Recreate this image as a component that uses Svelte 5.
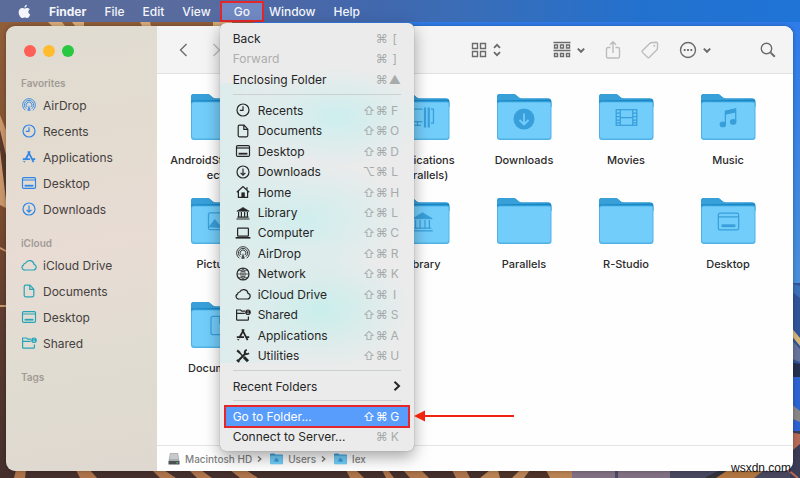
<script>
  const menus = ["File", "Edit", "View", "Go", "Window", "Help"];

  const favorites = [
    { name: "AirDrop", icon: "airdrop" },
    { name: "Recents", icon: "clock" },
    { name: "Applications", icon: "apps" },
    { name: "Desktop", icon: "desktop" },
    { name: "Downloads", icon: "download" },
  ];
  const icloud = [
    { name: "iCloud Drive", icon: "cloud" },
    { name: "Documents", icon: "doc" },
    { name: "Desktop", icon: "desktop" },
    { name: "Shared", icon: "shared" },
  ];
  const sections = [
    { title: "Favorites", items: favorites, tone: "blue" },
    { title: "iCloud", items: icloud, tone: "teal" },
    { title: "Tags", items: [], tone: "blue" },
  ];

  const navigation = [
    { name: "Back", keys: ["⌘", "["] },
    { name: "Forward", keys: ["⌘", "]"], disabled: true },
    { name: "Enclosing Folder", keys: ["⌘", "▲"] },
  ];
  const places = [
    { name: "Recents", icon: "clock", keys: ["⇧", "⌘", "F"] },
    { name: "Documents", icon: "doc", keys: ["⇧", "⌘", "O"] },
    { name: "Desktop", icon: "desktop", keys: ["⇧", "⌘", "D"] },
    { name: "Downloads", icon: "download", keys: ["⌥", "⌘", "L"] },
    { name: "Home", icon: "home", keys: ["⇧", "⌘", "H"] },
    { name: "Library", icon: "library", keys: ["⇧", "⌘", "L"] },
    { name: "Computer", icon: "computer", keys: ["⇧", "⌘", "C"] },
    { name: "AirDrop", icon: "airdrop", keys: ["⇧", "⌘", "R"] },
    { name: "Network", icon: "network", keys: ["⇧", "⌘", "K"] },
    { name: "iCloud Drive", icon: "cloud", keys: ["⇧", "⌘", "I"] },
    { name: "Shared", icon: "shared", keys: ["⇧", "⌘", "S"] },
    { name: "Applications", icon: "apps", keys: ["⇧", "⌘", "A"] },
    { name: "Utilities", icon: "tools", keys: ["⇧", "⌘", "U"] },
  ];
  const connect = [
    { name: "Go to Folder...", keys: ["⇧", "⌘", "G"], selected: true },
    { name: "Connect to Server...", keys: ["⌘", "K"] },
  ];

  // null leaves the cell free
  const folders = [
    { name: "AndroidStudioProjects" },
    null,
    { name: "Applications (Parallels)", glyph: "parallels" },
    { name: "Downloads", glyph: "download" },
    { name: "Movies", glyph: "film" },
    { name: "Music", glyph: "music" },
    { name: "Pictures", glyph: "picture" },
    null,
    { name: "Library", glyph: "library" },
    { name: "Parallels" },
    { name: "R-Studio" },
    { name: "Desktop", glyph: "desktop" },
    { name: "Documents", glyph: "doc" },
  ];

  const icons = {
    airdrop: `<path d="M4.2 13.2A6.4 6.4 0 1 1 11.8 13.2M5.2 11.6A4.6 4.6 0 1 1 10.8 11.6M6.1 10.1A2.9 2.9 0 1 1 9.9 10.1" stroke-width=".9"/><path d="M8 8 6.2 13.6Q8 14.4 9.8 13.6Z" fill="currentColor" stroke="none" opacity=".8"/>`,
    clock: `<circle cx="8" cy="8" r="6"/><path d="M8 4.2V8.3H4.8"/>`,
    apps: `<path d="M8.9 2.4 4.2 11M7.1 2.4 12.6 13.2M1.8 10.2H9M11.4 10.2H14.2M3.5 12.2 3 13.2" stroke-width="1.8"/>`,
    desktop: `<rect x="1.5" y="2.6" width="13" height="10.8" rx="1.2"/><path d="M1.5 5H14.5"/><rect x="3.6" y="9.8" width="8.8" height="1.8" fill="currentColor" stroke="none"/>`,
    download: `<circle cx="8" cy="8" r="6"/><path d="M8 4.6V11M5.6 8.8 8 11.2 10.4 8.8"/>`,
    cloud: `<path d="M4 13H12.4A2.9 2.9 0 0 0 13 7.300 4.400 4.400 0 0 0 4.700 6 2.400 2.400 0 0 0 2.500 8.100 2.600 2.600 0 0 0 4 13Z"/>`,
    doc: `<path d="M4.4 2.2H9L12.8 6.2V12.6Q12.8 13.8 11.6 13.8H4.4Q3.2 13.8 3.2 12.6V3.4Q3.2 2.2 4.4 2.2ZM8.8 2.4V6.4H12.6"/>`,
    shared: `<path d="M10 4.2H6.8L5.6 3H1.6V12.4Q1.6 13.2 2.4 13.2H12.6Q13.4 13.2 13.4 12.4V9.4M1.6 6.4H9.8"/><circle cx="13" cy="5.2" r="2.8" fill="currentColor" stroke="none"/><path d="M13 3.4V4.6M11.8 6.6Q13 5.2 14.2 6.6" stroke="#eee" stroke-width=".8"/>`,
    home: `<path d="M1.8 8.2 8 2.6 14.2 8.2M3.4 7.2V13.4H12.6V7.2M12 5.6V3.2"/><rect x="6.4" y="8.4" width="3.4" height="5" fill="currentColor" stroke="none"/>`,
    library: `<path d="M1.8 6.2 8 2.4 14.2 6.2Z" fill="currentColor" stroke-width=".6"/><path d="M3.6 7V12M6.4 7V12M9.6 7V12M12.4 7V12M2.4 12.2H13.6M1.4 14H14.6"/>`,
    computer: `<rect x="2.6" y="3.2" width="10.8" height="8" rx=".6"/><path d="M.6 12.8H15.4" stroke-width="1.6"/>`,
    network: `<circle cx="8" cy="8" r="6"/><path d="M8 2V14M2 8H14M3.8 4Q8 7 12.2 4M3.8 12Q8 9 12.2 12M8 2Q3.6 8 8 14M8 2Q12.4 8 8 14" stroke-width=".7"/>`,
    tools: `<path d="M4.6 4.8 8 8.300" stroke-width="1.400"/><path d="M8.800 9 13 13.200" stroke-width="3"/><path d="M2.2 2.4 5 5" stroke-width="2.200"/><path d="M11.2 4.8 3 13" stroke-width="2"/><path d="M11.800 1.800Q9.200 2.600 9.800 5.200 11 7.200 14 5.200M1.800 11.800 4.200 14.200" stroke-width="1.800"/>`,
    film: `<rect x="1.4" y="3" width="13.2" height="10"/><path d="M4 3V13M12 3V13M4 8H12M1.4 5.2H4M1.4 7.4H4M1.4 9.6H4M1.4 11.4H4M12 5.2H14.6M12 7.4H14.6M12 9.6H14.6M12 11.4H14.6" stroke-width=".8"/>`,
    music: `<path d="M6 12V4L12.6 2.6V10.4"/><path d="M6 3.6 12.8 2V4.8L6 6.2Z" fill="currentColor" stroke="none"/><ellipse cx="4.4" cy="12.4" rx="1.700" ry="1.4" fill="currentColor"/><ellipse cx="11" cy="10.8" rx="1.700" ry="1.4" fill="currentColor"/>`,
    picture: `<rect x="1.6" y="2.4" width="12.8" height="10.8" rx="1"/><circle cx="10.8" cy="5.6" r="1" fill="currentColor"/><path d="M2 11.6 5.6 7 9 11 11 9.4 14 12.4" fill="currentColor"/>`,
    parallels: `<path d="M8 2.6H1V10.6H8M2.8 13H7M4.8 11V13M13.4 2.6H15V11.6H13.4"/><path d="M9.6 1.6V14.4M12 1.6V14.4" stroke-width="1.4"/>`,
  };
</script>

{#snippet icon(name)}
  <svg class="icon" viewBox="0 0 16 16" aria-hidden="true">{@html icons[name]}</svg>
{/snippet}

{#snippet chevron()}
  <svg class="chevron" viewBox="0 0 8 16" aria-hidden="true"><path d="M.8 6.6 4 9.8 7.2 6.6" /></svg>
{/snippet}

{#snippet folder()}
  <path d="M1 8V4Q1 1 4 1H17Q19 1 20.500 2.400L22.500 4.200Q24 5.600 26 5.600H52Q55.500 5.600 55.500 9V14H1Z" fill="#1787c6" />
  <path d="M1 8V4Q1 1 4 1H17Q19 1 20.500 2.400L22.500 4.200Q24 5.600 26 5.600H52Q53.500 5.600 54.400 6.600L2 7.500Z" fill="#38a0d8" />
  <path d="M1 11Q1 8.400 3.600 8.400H53Q55.500 8.400 55.500 11V44Q55.500 47 52.500 47H4Q1 47 1 44Z" fill="#4fb2e6" />
  <path d="M2 11Q2 9.400 3.600 9.400H53Q54.500 9.400 54.500 11V43Q54.500 45.500 52 45.500H4.500Q2 45.500 2 43Z" fill="#72cdfa" />
{/snippet}

{#snippet menuGroup(items, kind)}
  <ul class="group {kind}">
    {#each items as item}
      <li>
        <button class="item" class:selected={item.selected} disabled={item.disabled}>
          {#if item.icon}{@render icon(item.icon)}{/if}
          <span class="name">{item.name}</span>
          <span class="keys">
            {#each item.keys as key}<kbd>{key}</kbd>{/each}
          </span>
        </button>
        {#if item.selected}
          <svg class="arrow" viewBox="0 0 102 12" aria-hidden="true">
            <path d="M10 6H101" stroke="#f0230f" stroke-width="2" />
            <path d="M1 6 12 .5V11.500Z" fill="#f0230f" />
          </svg>
        {/if}
      </li>
    {/each}
  </ul>
{/snippet}

<div class="screen">
  <svg class="wallpaper" viewBox="0 0 800 478" preserveAspectRatio="none" aria-hidden="true">
    <defs>
      <linearGradient id="rock" x1="0" y1="0" x2="0" y2="1">
        <stop offset="0" stop-color="#93603a" />
        <stop offset=".45" stop-color="#7a4b2f" />
        <stop offset=".7" stop-color="#5a3a30" />
        <stop offset="1" stop-color="#452f2c" />
      </linearGradient>
      <linearGradient id="sky" x1="0" y1="0" x2="0" y2="1">
        <stop offset="0" stop-color="#2f7bea" />
        <stop offset="1" stop-color="#4a8fd8" />
      </linearGradient>
    </defs>
    <rect width="800" height="478" fill="url(#rock)" />
    <path d="M48 22H62L68 30H56ZM72 22H84V30H78ZM140 22H150L152 30H144ZM213 22H232V30H213Z" fill="#d9ac78" />
    <path d="M0 115 6 130V208L0 205ZM0 247 8 251V253L0 249ZM0 305H8V307H0Z" fill="#c8966a" />
    <path d="M0 130 6 155V200L0 150Z" fill="#57382b" />
    <path d="M16 470H26L25 478H14ZM76 470H90L97 478H80ZM152 470H164L176 478H160ZM189 470H201L212 478H197ZM230 470H246L258 478H240ZM346 470H356L364 478H350ZM382 470H388L394 478H386ZM403 470H421L429 478H410ZM452 470H466L470 478H456Z" fill="#ad744b" />
    <path d="M490 470H572V478H480Z" fill="#ba8354" />
    <path d="M498 470H520L512 478H500ZM530 470H546L550 478H524Z" fill="#4e3329" />
    <rect x="572" y="470" width="98" height="8" fill="#817083" />
    <rect x="615" y="470" width="3" height="8" fill="#4c4964" />
    <rect x="670" y="470" width="130" height="8" fill="#484760" />
    <path d="M704 478 724 470H764L754 478Z" fill="#b17640" />
    <path d="M704 478 720 470H728L716 478Z" fill="#33323b" />
    <path d="M254 20H800V284H780V40H254Z" fill="url(#sky)" />
    <path d="M790 283H800V376H790Z" fill="#315397" />
    <path d="M790 283 800 286V298L790 290Z" fill="#3b70b8" />
    <path d="M790 326 800 338V346L790 334Z" fill="#d6b578" />
    <path d="M790 338 800 349V362L790 358Z" fill="#68739b" />
    <path d="M790 362 800 364V378H790Z" fill="#25304f" />
    <path d="M790 377H800V432H790Z" fill="#2d62d1" />
    <path d="M790 403 800 411V422L790 418Z" fill="#8a8587" />
    <path d="M790 431H800V478H790Z" fill="#3b3b55" />
    <path d="M790 432 800 434V444L793 450Z" fill="#b36a57" />
    <path d="M788 470 798 478" stroke="#b36a57" stroke-width="2" />
  </svg>

  <nav class="menubar">
    <button aria-label="Apple menu">
      <svg class="apple" viewBox="0 0 14 16" aria-hidden="true">
        <path d="M9.600 .6C9.700 2.200 8.500 3.700 6.900 3.800 6.700 2.200 8 .8 9.600 .6ZM7.200 4.700C8 4.700 8.600 4.100 9.900 4.100 11 4.100 12.100 4.700 12.800 5.600 10.400 7 10.800 10.200 13.200 11.100 12.500 13 11.200 15 9.800 15 8.800 15 8.500 14.400 7.300 14.400 6.100 14.400 5.700 15 4.800 15 3 15 .7 11.800 .7 8.700 .7 5.800 2.500 4.100 4.400 4.100 5.600 4.100 6.500 4.700 7.200 4.700Z" fill="currentColor" />
      </svg>
    </button>
    <button class="app-name">Finder</button>
    {#each menus as name}
      {#if name === "Go"}
        <div class="open">
          <button>{name}</button>
          <div class="menu">
            {@render menuGroup(navigation, "navigation")}
            <hr />
            {@render menuGroup(places, "places")}
            <hr />
            <button class="item recent">
              <span class="name">Recent Folders</span>
              <svg class="more" viewBox="0 0 8 12" aria-hidden="true"><path d="M1.500 1.800 6 6 1.500 10.200" /></svg>
            </button>
            <hr />
            {@render menuGroup(connect, "connect")}
          </div>
        </div>
      {:else}
        <button>{name}</button>
      {/if}
    {/each}
  </nav>

  <div class="window">
    <aside>
      <div class="lights">
        <button class="close" aria-label="Close"></button>
        <button class="minimize" aria-label="Minimize"></button>
        <button class="zoom" aria-label="Zoom"></button>
      </div>
      {#each sections as section}
        <section class={section.tone}>
          <h2>{section.title}</h2>
          {#each section.items as item}
            <a href="#{item.icon}">{@render icon(item.icon)}{item.name}</a>
          {/each}
        </section>
      {/each}
    </aside>

    <main>
      <header>
        <button aria-label="Back">
          <svg width="9" height="14" viewBox="0 0 9 14"><path d="M7.500 1 1.500 7 7.500 13" /></svg>
        </button>
        <button class="next" aria-label="Forward" disabled>
          <svg width="9" height="14" viewBox="0 0 9 14"><path d="M1.500 1 7.500 7 1.500 13" /></svg>
        </button>
        <button class="view" aria-label="View as icons">
          <svg width="16" height="16" viewBox="0 0 16 16"><path d="M1.500 1.500H6.500V6.500H1.500ZM9.500 1.500H14.500V6.500H9.500ZM1.500 9.500H6.500V14.500H1.500ZM9.500 9.500H14.500V14.500H9.500Z" /></svg>
          <svg width="8" height="14" viewBox="0 0 8 14"><path d="M1 4.800 4 1.800 7 4.800M1 9.200 4 12.200 7 9.200" stroke-width="1.800" /></svg>
        </button>
        <button class="arrange" aria-label="Group by">
          <svg width="18" height="18" viewBox="0 0 18 18"><path d="M.5 1.500H17.500M.5 9.500H17.500" /><path d="M1.500 4H4.500V7H1.500ZM7.500 4H10.500V7H7.500ZM13.500 4H16.500V7H13.500ZM1.500 12.500H4.500V15.500H1.500ZM7.500 12.500H10.500V15.500H7.500ZM13.500 12.500H16.500V15.500H13.500Z" /></svg>
          {@render chevron()}
        </button>
        <button aria-label="Share" disabled>
          <svg width="16" height="20" viewBox="0 0 16 20"><path d="M5.500 7.500H3Q1.500 7.500 1.500 9V16.500Q1.500 18 3 18H13Q14.500 18 14.500 16.500V9Q14.500 7.500 13 7.500H10.500M8 13V2M5 4.800 8 1.800 11 4.800" /></svg>
        </button>
        <button aria-label="Tags" disabled>
          <svg width="18" height="18" viewBox="0 0 18 18"><path d="M10 1.800 15.200 1.200Q16.500 1.200 16.600 2.500L16.400 7.600Q16.300 8.400 15.700 9L8.400 16.300Q7.400 17.200 6.400 16.300L1.500 11.400Q.7 10.400 1.500 9.500L8.700 2.400Q9.200 1.900 10 1.800Z" /><circle cx="13.300" cy="4.700" r="1" fill="currentColor" stroke="none" /></svg>
        </button>
        <button aria-label="More actions">
          <svg width="18" height="18" viewBox="0 0 18 18"><circle cx="9" cy="9" r="7.500" /><path d="M4.800 9H6.600M8.100 9H9.900M11.400 9H13.200" stroke-width="1.800" /></svg>
          {@render chevron()}
        </button>
        <button class="search" aria-label="Search">
          <svg width="16" height="16" viewBox="0 0 16 16"><circle cx="6.500" cy="6.500" r="5.200" /><path d="M10.400 10.400 14.800 14.800" stroke-width="2" /></svg>
        </button>
      </header>

      <ul class="files">
        {#each folders as item}
          <li>
            {#if item}
              <svg class="folder" viewBox="0 0 56 48" aria-hidden="true">
                {@render folder()}
                {#if item.glyph === "download"}
                  <circle cx="28" cy="26" r="10.500" fill="#399fda" />
                  <path d="M28 20.500V31M23.500 27 28 31.500 32.500 27" fill="none" stroke="#72cdfa" stroke-width="1.800" />
                {:else if item.glyph}
                  <svg class="glyph" x="16" y="12" width="25" height="25" viewBox="0 0 16 16">{@html icons[item.glyph]}</svg>
                {/if}
              </svg>
              <span>{item.name}</span>
            {/if}
          </li>
        {/each}
      </ul>

      <footer>
        <svg class="disk" viewBox="0 0 12 14" aria-hidden="true">
          <path d="M2 1H10L11.500 9H.5Z" fill="#a9adb0" />
          <path d="M2.600 1.800H9.400L10.200 7H1.800Z" fill="#c7cacc" />
          <path d="M.5 9H11.500V12.500H.5Z" fill="#4b5052" />
          <path d="M8.500 10.800H10" stroke="#6de09a" />
        </svg>
        <a href="#disk">Macintosh HD</a>
        {#each ["Users", "lex"] as name}
          <svg class="step" viewBox="0 0 5 8" aria-hidden="true"><path d="M1 1.400 3.800 4 1 6.600" /></svg>
          <svg class="small-folder" viewBox="0 0 56 48" aria-hidden="true">
            {@render folder()}
            <path d="M19 27 28 19 37 27V36H19Z" fill="#399fda" />
          </svg>
          <a href="#{name}">{name}</a>
        {/each}
      </footer>
    </main>
  </div>

  <small class="credit">wsxdn.com</small>
</div>

<style>
  :global(body) {
    margin: 0;
  }
  .screen {
    position: relative;
    min-height: 100vh;
    display: flex;
    flex-direction: column;
    overflow: hidden;
    font-family: Inter, "Liberation Sans", sans-serif;
    font-size: 12px;
    color: #2b2b2b;
  }
  .wallpaper {
    position: absolute;
    width: 100%;
    height: 100%;
  }
  button {
    display: flex;
    align-items: center;
    padding: 0;
    border: none;
    background: none;
    color: inherit;
    font: inherit;
  }
  ul {
    margin: 0;
    padding: 0;
    list-style: none;
  }
  a {
    color: inherit;
    text-decoration: none;
  }
  .icon {
    width: 16px;
    height: 16px;
    fill: none;
    stroke: currentColor;
    stroke-width: 1.2;
  }

  .menubar {
    position: relative;
    z-index: 2;
    display: flex;
    height: 22px;
    padding-left: 9px;
    background: linear-gradient(90deg, #5b6c99 0%, #586b9f 25%, #4267ac 45%, #3a6db7 58%, #2371ce 80%, #1f74d6 100%);
    color: #f3f5fa;
    font-weight: 500;
  }
  .menubar > button {
    padding: 0 9px;
  }
  .menubar .app-name {
    font-weight: 700;
  }
  .apple {
    width: 13px;
    height: 15px;
  }
  .open {
    position: relative;
    display: flex;
    margin-right: -4px;
  }
  .open > button {
    box-sizing: border-box;
    margin-top: 1px;
    padding: 0 12px;
    border: 2px solid #e3272b;
    background: #7089c2;
  }

  .menu {
    position: absolute;
    top: 23px;
    left: 0;
    box-sizing: border-box;
    width: 194px;
    padding: 5px 5px 4px;
    border-radius: 6px;
    background:
      radial-gradient(ellipse 90px 50px at 60% 22%, #cdeeee, transparent),
      radial-gradient(ellipse 100px 60px at 45% 46%, #cfeeed, transparent),
      radial-gradient(ellipse 90px 60px at 52% 67%, #c9eeeb, transparent),
      linear-gradient(90deg, #dcecec, transparent 45%) 0 60px / 100% 280px no-repeat,
      #ebebeb;
    box-shadow: 0 0 1px #777, 0 6px 16px rgba(0, 0, 0, 0.35);
    color: #262626;
    font-weight: 400;
  }
  .group {
    display: grid;
    grid-auto-rows: 1fr;
  }
  .navigation {
    min-height: 62px;
  }
  .places {
    min-height: 266px;
  }
  .connect {
    min-height: 41px;
  }
  .group li {
    position: relative;
    display: flex;
  }
  .item {
    box-sizing: border-box;
    flex: 1;
    width: 100%;
    padding: 0 8px;
    text-align: left;
  }
  .item:disabled {
    color: #adadad;
  }
  .item .icon {
    width: 20px;
    margin-right: 5px;
  }
  .name {
    flex: 1;
    white-space: nowrap;
  }
  .recent {
    height: 20px;
  }
  .keys {
    display: flex;
    gap: 1px;
    color: #a6abab;
  }
  kbd {
    width: 12px;
    font: inherit;
    text-align: center;
  }
  .selected {
    outline: 2px solid #e3272b;
    outline-offset: -1px;
    background: #589cfc;
    color: #fff;
  }
  .selected .keys {
    color: #fff;
  }
  .arrow {
    position: absolute;
    left: 100%;
    top: 4px;
    width: 102px;
    height: 12px;
    margin-left: 4px;
  }
  .more {
    width: 8px;
    height: 12px;
    fill: none;
    stroke: currentColor;
    stroke-width: 2;
  }
  hr {
    height: 1px;
    margin: 4px 8px 5px;
    border: none;
    background: #cbd0d0;
  }

  .window {
    position: relative;
    flex: 1;
    display: flex;
    margin: 4px 7px 7px 6px;
    border-radius: 9px;
    overflow: hidden;
    box-shadow: 0 0 4px rgba(0, 0, 0, 0.3);
  }
  aside {
    box-sizing: border-box;
    width: 151px;
    padding-left: 15px;
    background: linear-gradient(170deg, #e0dcd2 0%, #e3dbd0 25%, #e8dcd4 50%, #e0dcd1 75%, #dfd8d0 100%);
  }
  .lights {
    display: flex;
    align-items: center;
    gap: 7px;
    height: 49px;
    padding-left: 3px;
  }
  .lights button {
    width: 12px;
    height: 12px;
    border-radius: 50%;
  }
  .close {
    background: #fe5f57;
  }
  .minimize {
    background: #febc2e;
  }
  .zoom {
    background: #28c840;
  }
  section {
    margin-bottom: 13px;
  }
  h2 {
    margin: 0;
    color: #a19b95;
    font-size: 10px;
    font-weight: 600;
    line-height: 17px;
  }
  section a {
    display: flex;
    align-items: center;
    gap: 6px;
    height: 26px;
    color: #45413e;
  }
  .blue .icon {
    color: #2e86e6;
  }
  .teal .icon {
    color: #25a5b8;
  }

  main {
    flex: 1;
    display: flex;
    flex-direction: column;
    background: #fefefe;
  }
  header {
    display: flex;
    align-items: center;
    gap: 20px;
    height: 47px;
    padding: 0 17px 0 22px;
    border-bottom: 1px solid #e0e0e0;
    background: #f5f4f4;
    color: #6b6b6b;
  }
  header button {
    gap: 6px;
  }
  header button:disabled {
    color: #bcbcbc;
  }
  header svg {
    fill: none;
    stroke: currentColor;
    stroke-width: 1.4;
  }
  .next {
    margin-left: 4px;
  }
  .view {
    margin-left: auto;
  }
  .arrange {
    margin-left: 32px;
  }
  .search {
    margin-left: 29px;
  }
  .chevron {
    width: 8px;
    height: 16px;
    stroke-width: 2;
  }
  .files {
    flex: 1;
    display: grid;
    grid-template-columns: repeat(auto-fill, 102px);
    grid-auto-rows: 104px;
    padding: 19px 0 0 10px;
  }
  .files li {
    display: flex;
    flex-direction: column;
    align-items: center;
    gap: 12px;
    font-size: 11px;
    font-weight: 500;
    line-height: 15px;
    text-align: center;
    word-break: break-word;
  }
  .folder {
    width: 56px;
    height: 48px;
    flex: none;
  }
  .glyph {
    color: #399fda;
    fill: none;
    stroke: currentColor;
    stroke-width: 0.8;
  }
  footer {
    display: flex;
    align-items: center;
    gap: 5px;
    height: 25px;
    padding-left: 11px;
    border-top: 1px solid #e4e4e4;
    color: #808080;
    font-size: 10px;
    font-weight: 500;
  }
  .disk {
    width: 12px;
    height: 14px;
  }
  .step {
    width: 5px;
    height: 8px;
    margin-right: 3px;
    fill: none;
    stroke: #777;
    stroke-width: 1.4;
  }
  .small-folder {
    width: 13px;
    height: 12px;
  }
  .credit {
    position: absolute;
    right: 9px;
    bottom: 3px;
    color: #111;
    font: 12px "Liberation Sans", sans-serif;
  }
</style>
